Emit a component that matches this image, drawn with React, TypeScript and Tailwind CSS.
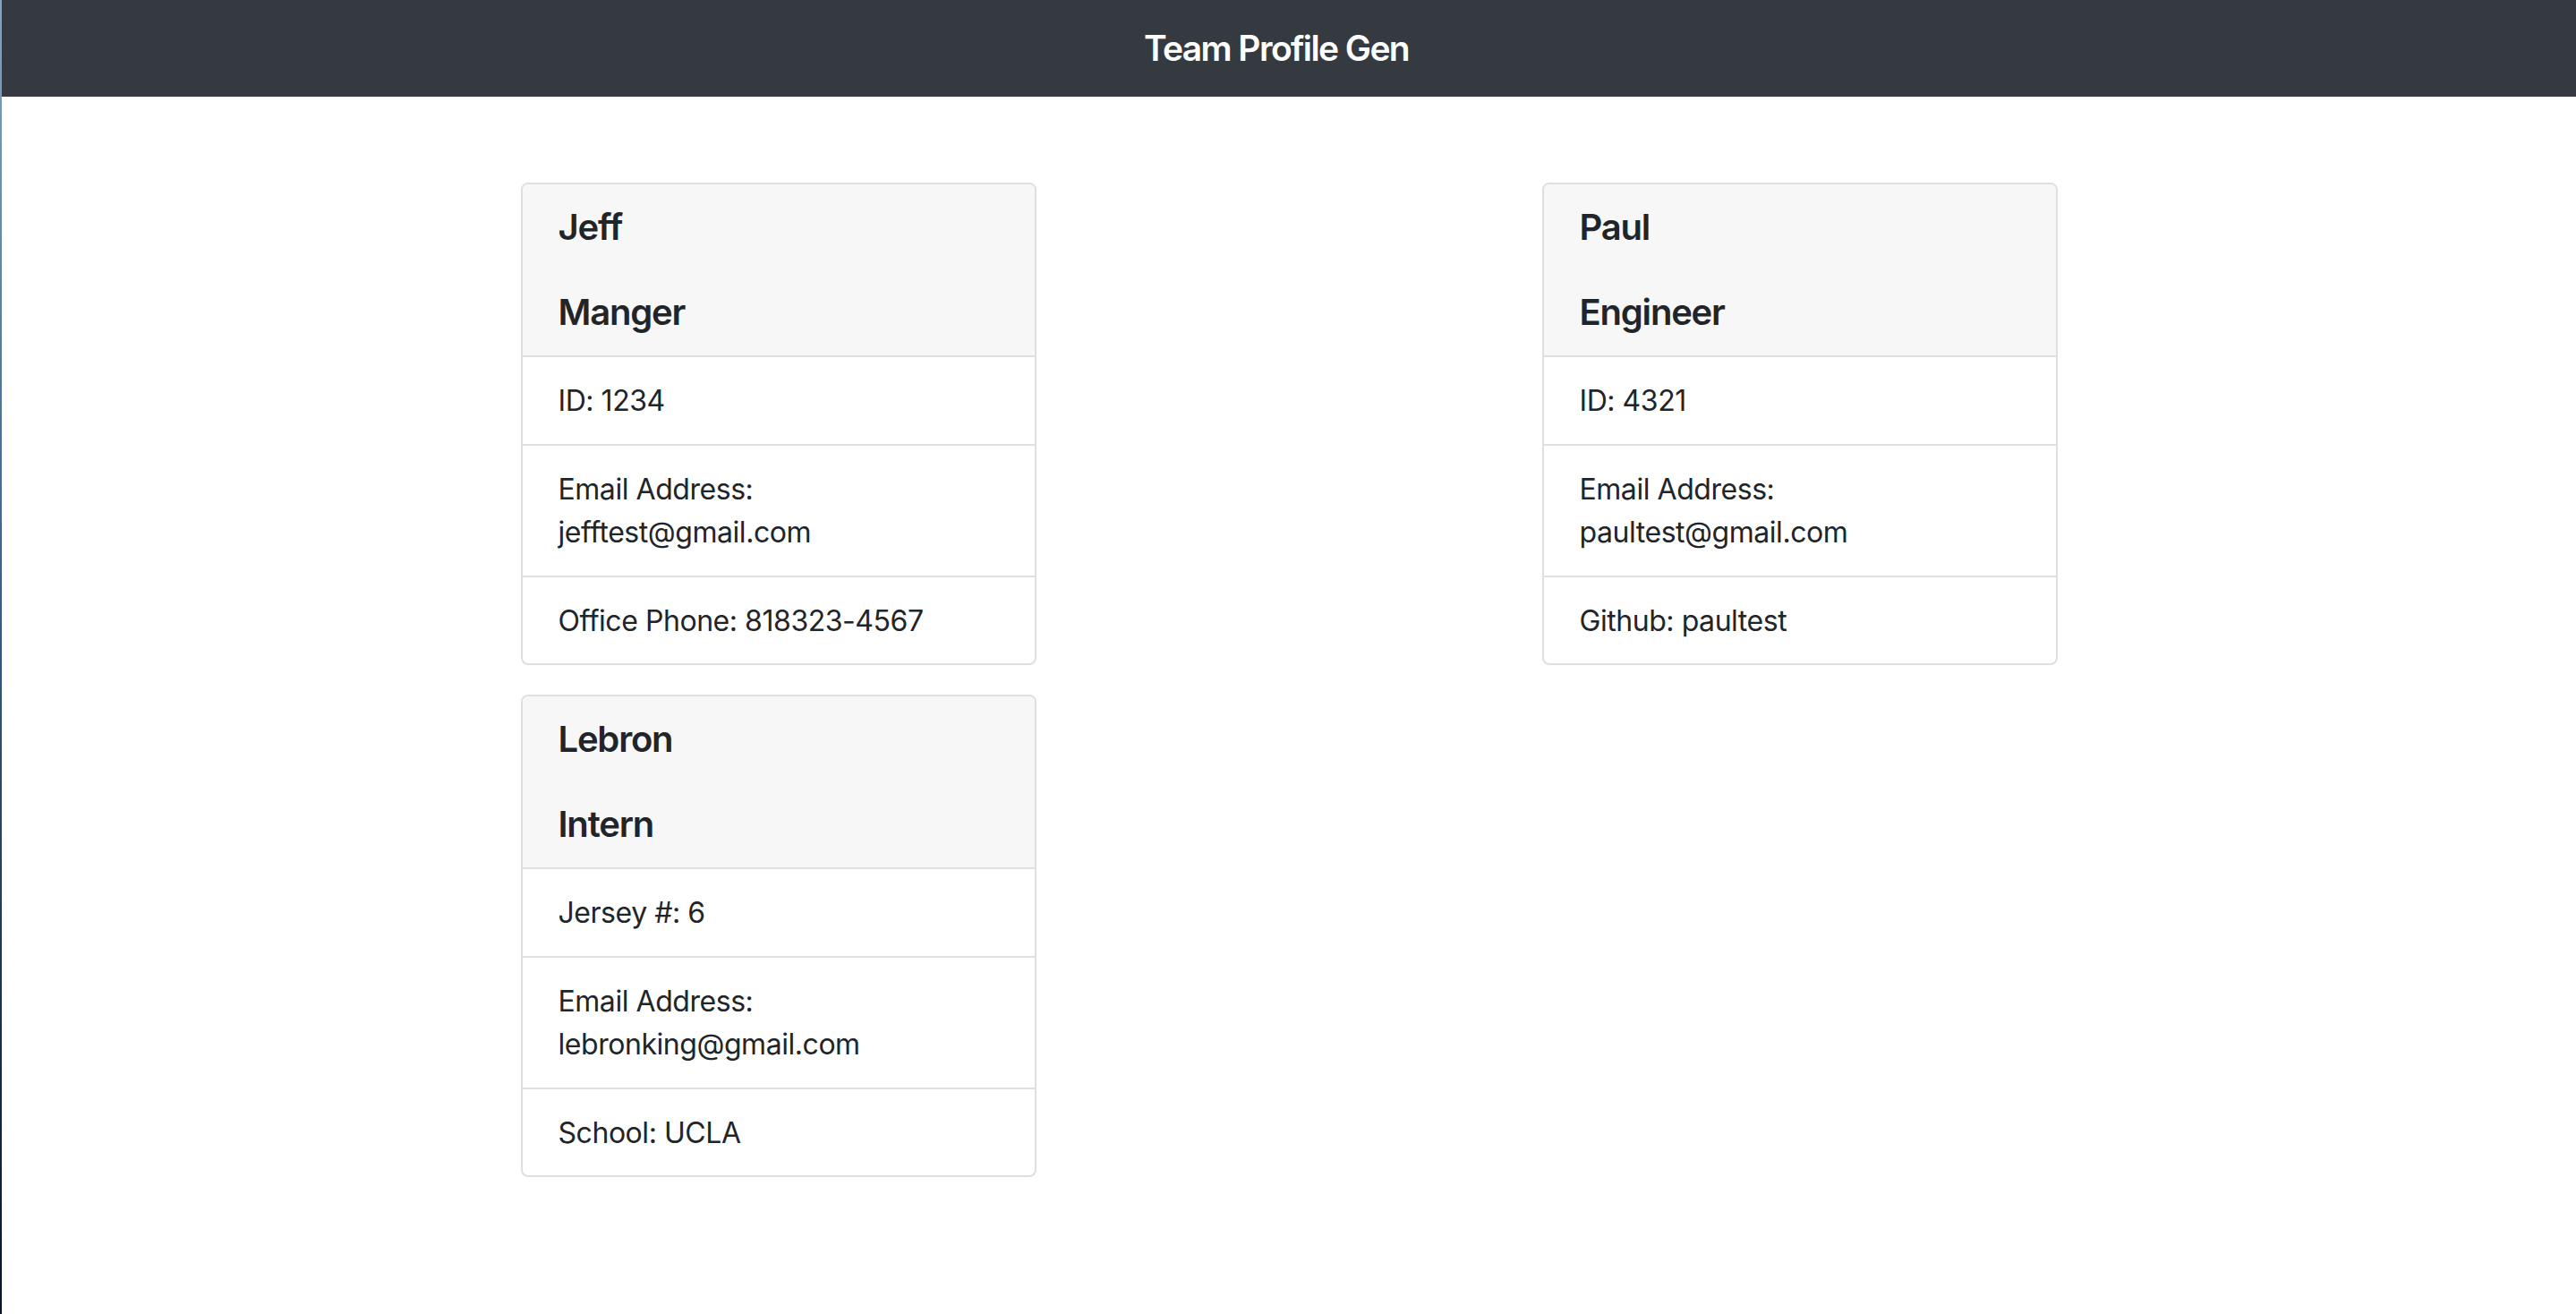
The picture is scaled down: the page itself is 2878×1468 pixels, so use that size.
const font = { fontFamily: "Inter, 'Noto Sans', sans-serif" };

type Member = {
  name: string;
  role: string;
  first: string;
  email: string;
  last: string;
};

const left: Member[] = [
  { name: "Jeff", role: "Manger", first: "ID: 1234", email: "jefftest@gmail.com", last: "Office Phone: 818323-4567" },
  { name: "Lebron", role: "Intern", first: "Jersey #: 6", email: "lebronking@gmail.com", last: "School: UCLA" },
];

const right: Member[] = [
  { name: "Paul", role: "Engineer", first: "ID: 4321", email: "paultest@gmail.com", last: "Github: paultest" },
];

const Card = ({ m }: { m: Member }) => (
  <div className="w-[576px] border-2 border-[#dfdfdf] rounded-[8px] overflow-hidden bg-white text-[#212529]">
    <div className="bg-[#f7f7f7] border-b-2 border-[#dfdfdf] px-[40px] py-[24px] flex flex-col gap-[47px]">
      <h5 className="text-[40px] leading-[48px] font-semibold tracking-[-1.2px]">{m.name}</h5>
      <h5 className="text-[40px] leading-[48px] font-semibold tracking-[-1.2px]">{m.role}</h5>
    </div>
    <ul className="text-[32px] leading-[48px] tracking-[-0.45px]">
      <li className="px-[40px] pt-[25px] pb-[24px] border-b-2 border-[#dfdfdf]">{m.first}</li>
      <li className="px-[40px] pt-[25px] pb-[24px] border-b-2 border-[#dfdfdf]">
        Email Address:
        <br />
        {m.email}
      </li>
      <li className="px-[40px] pt-[25px] pb-[23px]">{m.last}</li>
    </ul>
  </div>
);

export default function App() {
  return (
    <div className="flex min-h-[1468px] bg-white" style={font}>
      <div className="w-[2px] shrink-0 bg-gradient-to-b from-[#7ea6c9] via-[#2f5a80] to-[#06152a]" />
      <div className="flex-1">
        <nav className="h-[108px] bg-[#343a40] flex items-center justify-center pr-[28px]">
          <h1 className="text-white text-[39px] font-semibold tracking-[-1.6px]">Team Profile Gen</h1>
        </nav>
        <div className="w-[2282px] mx-auto grid grid-cols-2 pt-[96px]">
          <div className="flex flex-col items-center gap-[33px]">
            {left.map((m) => (
              <Card key={m.name} m={m} />
            ))}
          </div>
          <div className="flex flex-col items-center gap-[33px]">
            {right.map((m) => (
              <Card key={m.name} m={m} />
            ))}
          </div>
        </div>
      </div>
    </div>
  );
}
